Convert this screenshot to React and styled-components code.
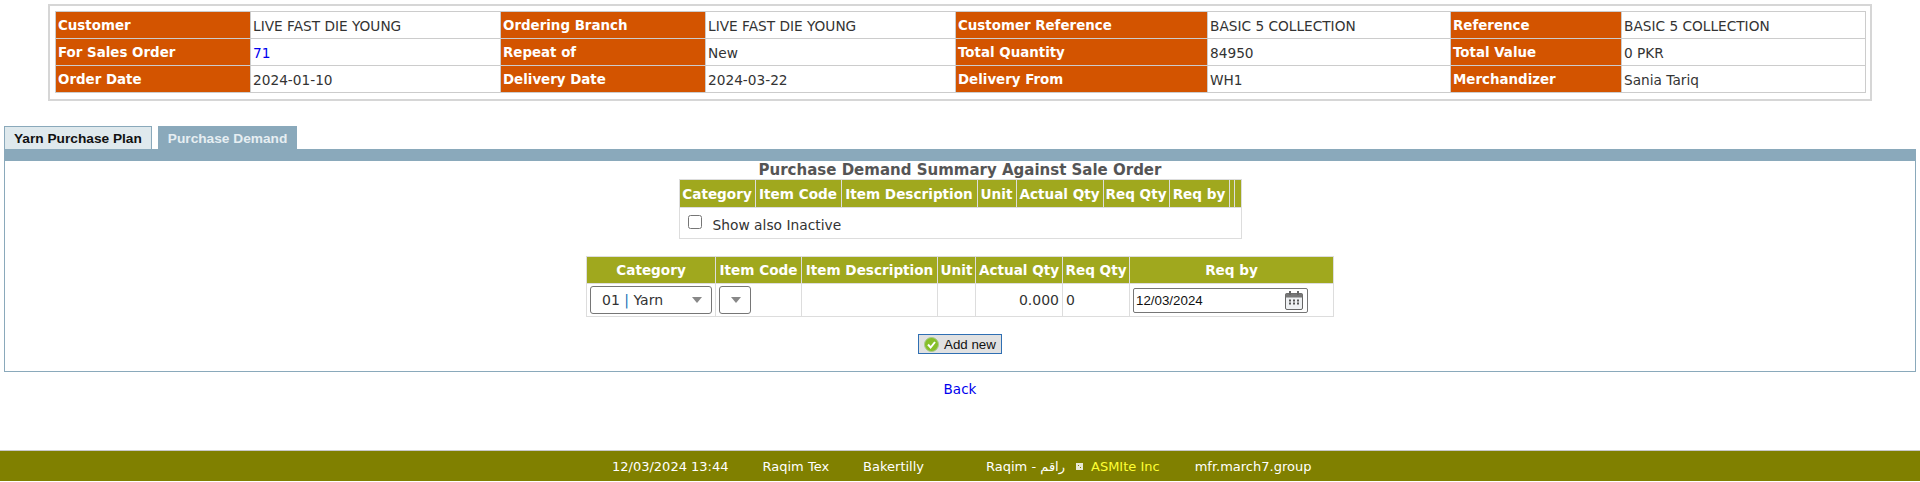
import styled, { createGlobalStyle } from "styled-components";

const GlobalStyle = createGlobalStyle`
  html, body { margin: 0; padding: 0; background: #fff; }
  body { font-family: "DejaVu Sans", Verdana, sans-serif; font-size: 13px; color: #333; }
`;

const infoRows = [
  [["Customer", "LIVE FAST DIE YOUNG"], ["Ordering Branch", "LIVE FAST DIE YOUNG"], ["Customer Reference", "BASIC 5 COLLECTION"], ["Reference", "BASIC 5 COLLECTION"]],
  [["For Sales Order", "71", true], ["Repeat of", "New"], ["Total Quantity", "84950"], ["Total Value", "0 PKR"]],
  [["Order Date", "2024-01-10"], ["Delivery Date", "2024-03-22"], ["Delivery From", "WH1"], ["Merchandizer", "Sania Tariq"]],
];

const infoCols = [195, 250, 205, 250, 252, 243, 171, 244];
const summaryCols = [76, 86, 136, 39, 87, 66, 60, 5, 7];
const entryCols = [129, 86, 136, 38, 87, 67, 204];

const Page = styled.div`
  height: 482px;
  overflow: hidden;
  display: flex;
  flex-direction: column;
`;

const InfoBox = styled.div`
  margin: 4px 48px 0 48px;
  padding: 5px;
  border: 2px solid #d6d6d6;
  height: 83px;
`;

const Table = styled.table`
  border-collapse: collapse;
  table-layout: fixed;
  width: ${(p) => p.$width}px;
  margin: 0 auto;
`;

const Label = styled.td`
  background: #d35400;
  color: #fff;
  font-weight: bold;
  font-size: 13.4px;
  height: 25px;
  padding: 1px 2px 0;
  border: 1px solid #ccc;
  white-space: nowrap;
`;

const Value = styled.td`
  font-size: 13.7px;
  padding: 1px 2px 0;
  border: 1px solid #ccc;
  white-space: nowrap;
`;

const OrderLink = styled.a`
  color: #0000ee;
  text-decoration: none;
`;

const Tabs = styled.div`
  display: flex;
  gap: 6px;
  margin: 25px 0 0 4px;
  height: 23px;
`;

const Tab = styled.div`
  display: flex;
  align-items: center;
  padding: 0 9px;
  font-family: "Liberation Sans", Arial, sans-serif;
  font-size: 13.7px;
  font-weight: bold;
  color: ${(p) => (p.$active ? "#e6eef2" : "#111")};
  background: ${(p) => (p.$active ? "#8aa9bb" : "#dfe9ed")};
  border: 1px solid #8aa9bb;
  border-bottom: 0;
`;

const Panel = styled.div`
  margin: 0 4px;
  height: 210px;
  border: 1px solid #8aa9bb;
  border-top: 12px solid #8aa9bb;
  box-sizing: content-box;
  display: flex;
  flex-direction: column;
  align-items: center;
`;

const Title = styled.div`
  font-size: 15px;
  font-weight: bold;
  color: #555;
  line-height: 18px;
`;

const GridHead = styled.th`
  background: #a0a81e;
  color: #fff;
  font-size: 13.6px;
  font-weight: bold;
  font-family: "DejaVu Sans", Verdana, sans-serif;
  padding: 0;
  height: ${(p) => p.$height}px;
  border: 1px solid #ddd;
  white-space: nowrap;
  overflow: hidden;
`;

const GridCell = styled.td`
  border: 1px solid #ddd;
  padding: 0 3px;
  height: ${(p) => p.$height}px;
  text-align: ${(p) => p.$align || "left"};
  font-size: 14px;
`;

const CheckRow = styled.label`
  display: flex;
  align-items: center;
  gap: 11px;
  padding-left: 4px;
  font-size: 13.8px;
`;

const CheckText = styled.span`
  padding-top: 4px;
`;

const Check = styled.input`
  margin: 0 0 2px 1px;
  width: 14px;
  height: 14px;
`;

const Section = styled.div`
  margin-top: ${(p) => p.$top}px;
`;

const Select = styled.div`
  display: flex;
  align-items: center;
  justify-content: space-between;
  box-sizing: border-box;
  width: ${(p) => p.$width}px;
  height: 28px;
  padding: 0 9px 0 11px;
  border: 1px solid #767676;
  border-radius: 3px;
  background: #fff;
  font-size: 14px;
`;

const Caret = styled.span`
  width: 0;
  height: 0;
  border-left: 5px solid transparent;
  border-right: 5px solid transparent;
  border-top: 6px solid #888;
`;

const Pipe = styled.span`
  color: #1a6fb5;
`;

const DateBox = styled.div`
  display: flex;
  align-items: center;
  justify-content: space-between;
  box-sizing: border-box;
  width: 175px;
  height: 25px;
  padding: 0 3px 0 2px;
  border: 1px solid #767676;
  border-radius: 2px;
  font-family: "Liberation Sans", Arial, sans-serif;
  font-size: 13.33px;
  color: #111;
`;

const AddButton = styled.button`
  display: flex;
  align-items: center;
  gap: 5px;
  box-sizing: border-box;
  width: 84px;
  height: 20px;
  margin-top: 17px;
  padding: 0 5px;
  background: #e1e1e1;
  border: 1px solid #2f6fb3;
  font-family: "Liberation Sans", Arial, sans-serif;
  font-size: 13.33px;
  color: #111;
`;

const BackLink = styled.a`
  display: block;
  text-align: center;
  margin-top: 9px;
  color: #0000ee;
  font-size: 13.5px;
  line-height: 16px;
  text-decoration: none;
`;

const Footer = styled.div`
  margin-top: auto;
  margin-bottom: 1px;
  height: 30px;
  background: #808000;
  border-top: 1px solid #c8c8c8;
  display: flex;
  align-items: center;
  padding-left: 612px;
  color: #fff;
  font-size: 13px;
  white-space: nowrap;
`;

const FooterItem = styled.span`
  margin-left: ${(p) => p.$left || 0}px;
  color: ${(p) => (p.$brand ? "#ffff33" : "#fff")};
`;

const CheckIcon = () => (
  <svg width="15" height="15" viewBox="0 0 15 15">
    <circle cx="7.5" cy="7.5" r="7" fill="#86bf28" stroke="#a9c98a" />
    <path d="M4 7.5l2.6 3L11 5" fill="none" stroke="#fff" strokeWidth="2" />
  </svg>
);

const CalendarIcon = () => (
  <svg width="20" height="21" viewBox="0 0 20 21">
    <rect x="1.5" y="3.5" width="17" height="16" rx="1.5" fill="#eef0f2" stroke="#666" />
    <rect x="1.5" y="3.5" width="17" height="4" fill="#777" />
    <rect x="5" y="1" width="2" height="4" fill="#666" />
    <rect x="13" y="1" width="2" height="4" fill="#666" />
    <path d="M5 10.5h2M9 10.5h2M13 10.5h2M5 13.5h2M9 13.5h2M13 13.5h2" stroke="#555" strokeWidth="2" />
  </svg>
);

const SmallLogo = () => (
  <svg width="9" height="9" viewBox="0 0 9 9">
    <path d="M1 1h7v7H1z" fill="#e8e8d8" />
    <path d="M3 3h1v1H3zM5 5h1v1H5z" fill="#808000" />
  </svg>
);

const App = () => {
  const summaryHeads = ["Category", "Item Code", "Item Description", "Unit", "Actual Qty", "Req Qty", "Req by", "", ""];
  const entryHeads = ["Category", "Item Code", "Item Description", "Unit", "Actual Qty", "Req Qty", "Req by"];

  return (
    <Page>
      <GlobalStyle />
      <InfoBox>
        <Table $width={1810}>
          <colgroup>
            {infoCols.map((w, i) => (
              <col key={i} width={w} />
            ))}
          </colgroup>
          <tbody>
            {infoRows.map((row, i) => (
              <tr key={i}>
                {row.flatMap(([label, value, link]) => [
                  <Label key={label}>{label}</Label>,
                  <Value key={label + "v"}>
                    {link ? <OrderLink href="#">{value}</OrderLink> : value}
                  </Value>,
                ])}
              </tr>
            ))}
          </tbody>
        </Table>
      </InfoBox>

      <Tabs>
        <Tab>Yarn Purchase Plan</Tab>
        <Tab $active>Purchase Demand</Tab>
      </Tabs>

      <Panel>
        <Title>Purchase Demand Summary Against Sale Order</Title>
        <Table $width={561}>
          <colgroup>
            {summaryCols.map((w, i) => (
              <col key={i} width={w} />
            ))}
          </colgroup>
          <thead>
            <tr>
              {summaryHeads.map((h, i) => (
                <GridHead key={i} $height={27}>{h}</GridHead>
              ))}
            </tr>
          </thead>
          <tbody>
            <tr>
              <GridCell colSpan={9} $height={30}>
                <CheckRow>
                  <Check type="checkbox" />
                  <CheckText>Show also Inactive</CheckText>
                </CheckRow>
              </GridCell>
            </tr>
          </tbody>
        </Table>

        <Section $top={17}>
          <Table $width={747}>
            <colgroup>
              {entryCols.map((w, i) => (
                <col key={i} width={w} />
              ))}
            </colgroup>
            <thead>
              <tr>
                {entryHeads.map((h, i) => (
                  <GridHead key={i} $height={26}>{h}</GridHead>
                ))}
              </tr>
            </thead>
            <tbody>
              <tr>
                <GridCell $height={32}>
                  <Select $width={122}>
                    <span>01 <Pipe>|</Pipe> Yarn</span>
                    <Caret />
                  </Select>
                </GridCell>
                <GridCell>
                  <Select $width={32}>
                    <Caret />
                  </Select>
                </GridCell>
                <GridCell />
                <GridCell />
                <GridCell $align="right">0.000</GridCell>
                <GridCell>0</GridCell>
                <GridCell>
                  <DateBox>
                    12/03/2024
                    <CalendarIcon />
                  </DateBox>
                </GridCell>
              </tr>
            </tbody>
          </Table>
        </Section>

        <AddButton>
          <CheckIcon />
          Add new
        </AddButton>
      </Panel>

      <BackLink href="#">Back</BackLink>

      <Footer>
        <FooterItem>12/03/2024 13:44</FooterItem>
        <FooterItem $left={34}>Raqim Tex</FooterItem>
        <FooterItem $left={34}>Bakertilly</FooterItem>
        <FooterItem $left={62}>Raqim - راقم</FooterItem>
        <FooterItem $left={10}><SmallLogo /></FooterItem>
        <FooterItem $left={7} $brand>ASMIte Inc</FooterItem>
        <FooterItem $left={35}>mfr.march7.group</FooterItem>
      </Footer>
    </Page>
  );
};

export default App;
